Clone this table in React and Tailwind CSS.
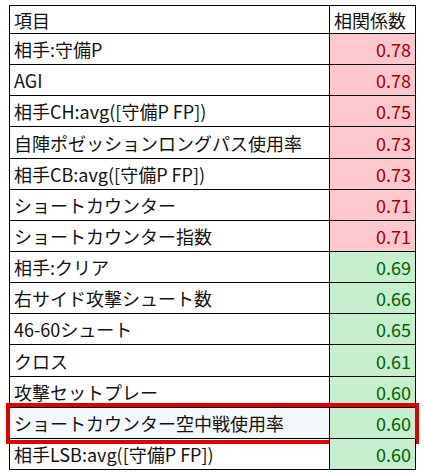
import React from 'react';

const rows = [
  { name: '相手:守備P', value: '0.78', bad: true },
  { name: 'AGI', value: '0.78', bad: true },
  { name: '相手CH:avg([守備P FP])', value: '0.75', bad: true },
  { name: '自陣ポゼッションロングパス使用率', value: '0.73', bad: true },
  { name: '相手CB:avg([守備P FP])', value: '0.73', bad: true },
  { name: 'ショートカウンター', value: '0.71', bad: true },
  { name: 'ショートカウンター指数', value: '0.71', bad: true },
  { name: '相手:クリア', value: '0.69' },
  { name: '右サイド攻撃シュート数', value: '0.66' },
  { name: '46-60シュート', value: '0.65' },
  { name: 'クロス', value: '0.61' },
  { name: '攻撃セットプレー', value: '0.60' },
  { name: 'ショートカウンター空中戦使用率', value: '0.60', marked: true },
  { name: '相手LSB:avg([守備P FP])', value: '0.60' },
];

const App = () => {
  return (
    <div
      className="w-[424px] h-[475px] bg-white pt-[5px] pl-[9px] text-[18px] leading-none text-[#111]"
      style={{ fontFamily: '"Noto Sans CJK JP", "Noto Sans", sans-serif' }}
    >
      <div className="w-[407px] border-t border-l border-black">
        <div className="flex h-[28px] border-b border-black">
          <div className="w-[320px] flex items-center pl-[4px] border-r border-black">項目</div>
          <div className="flex-1 flex items-center pl-[4px] border-r border-black">相関係数</div>
        </div>
        {rows.map((r, i) => (
          <div
            key={r.name}
            className={`relative flex border-b border-black ${i === 3 || i === 10 ? 'h-[32px]' : 'h-[31px]'}`}
          >
            <div
              className={`w-[320px] flex items-center pl-[4px] border-r border-black ${r.marked ? 'bg-[#f4f8fc]' : ''}`}
            >
              {r.name}
            </div>
            <div
              className={`flex-1 flex items-center justify-end pr-[4px] border-r border-black ${
                r.bad ? 'bg-[#ffc7ce] text-[#9c0006]' : 'bg-[#c6efce] text-[#006100]'
              }`}
            >
              {r.value}
            </div>
            {r.marked && (
              <div className="absolute left-[-4px] right-[-3px] top-[-5px] bottom-[-6px] border-[4px] border-[#e00000] pointer-events-none" />
            )}
          </div>
        ))}
      </div>
    </div>
  );
};

export default App;
